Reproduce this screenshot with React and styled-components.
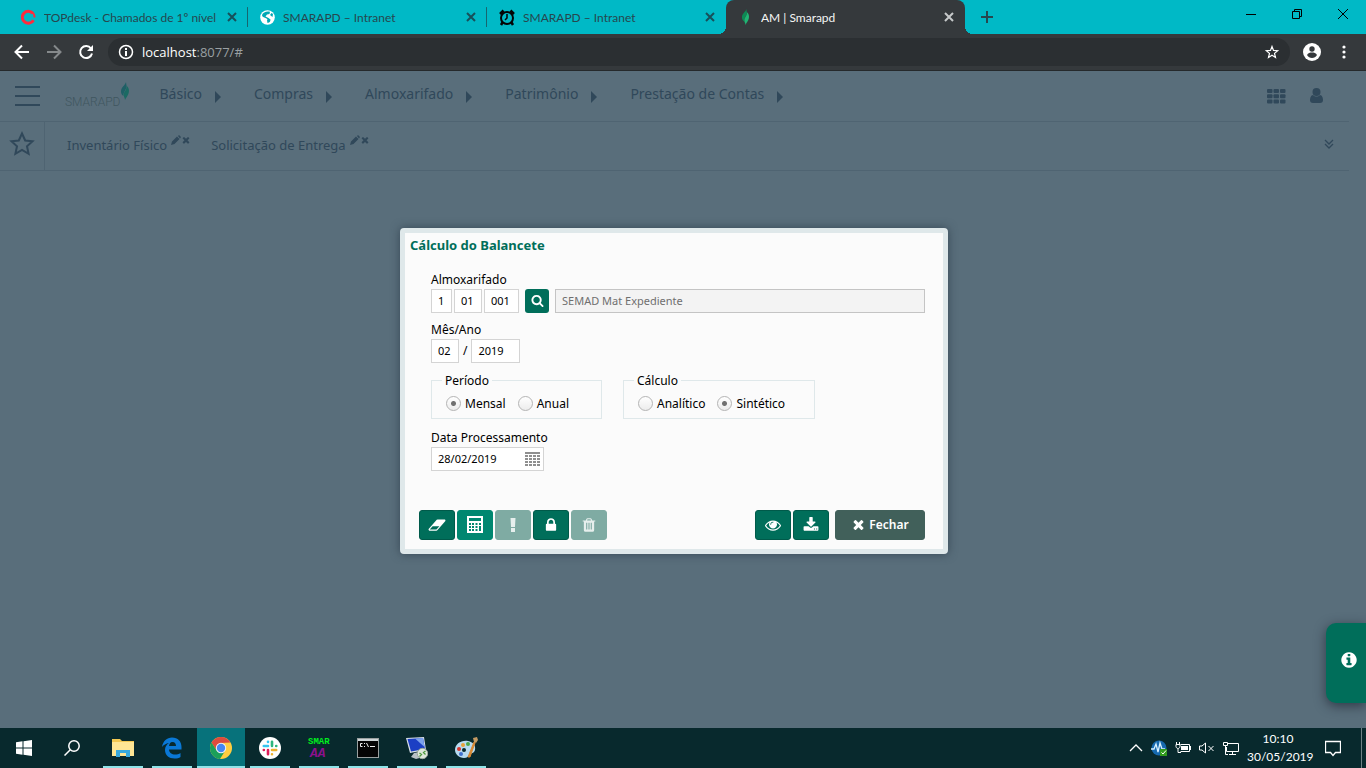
import React from "react";
import styled, { createGlobalStyle, css } from "styled-components";

const chromeFont = 'Lato, "Open Sans", sans-serif';
const appFont = '"Noto Sans", "Open Sans", sans-serif';

const GlobalStyle = createGlobalStyle`
  *, *::before, *::after { box-sizing: border-box; }
  body { margin: 0; font-family: ${appFont}; }
  button { border: 0; padding: 0; background: none; color: inherit; font: inherit; }
  a { color: inherit; text-decoration: none; }
  svg { display: block; flex: none; }
`;

const Screen = styled.div`
  display: flex;
  flex-direction: column;
  min-height: 100vh;
`;

/* Browser window */

const TabStrip = styled.div`
  display: flex;
  align-items: flex-start;
  height: 34px;
  padding-left: 9px;
  background: #00b9c6;
  color: #26474e;
  font-family: ${chromeFont};
  font-size: 12px;
`;

const Tab = styled.div`
  position: relative;
  display: flex;
  align-items: center;
  flex: 0 1 239px;
  min-width: 0;
  height: 34px;
  padding: 0 11px 0 12px;
  border-radius: 8px 8px 0 0;
  ${(p) =>
    p.$divided &&
    css`
      background: linear-gradient(#17666f, #17666f) no-repeat right 7px / 1px 20px;
    `}
  ${(p) =>
    p.$active &&
    css`
      background: #35393c;
      color: #f4f5f5;
      &::before,
      &::after {
        content: "";
        position: absolute;
        bottom: 0;
        width: 8px;
        height: 8px;
      }
      &::before {
        right: 100%;
        background: radial-gradient(circle at 0 0, transparent 8px, #35393c 8px);
      }
      &::after {
        left: 100%;
        background: radial-gradient(circle at 100% 0, transparent 8px, #35393c 8px);
      }
    `}
`;

const TabTitle = styled.span`
  flex: 1;
  min-width: 0;
  margin-left: 8px;
  overflow: hidden;
  white-space: nowrap;
`;

const TabClose = styled.button`
  color: ${(p) => (p.$active ? "#c6c9ca" : "#17505a")};
`;

const NewTab = styled.button`
  display: flex;
  align-items: center;
  height: 34px;
  padding-left: 16px;
`;

const WindowControls = styled.div`
  display: flex;
  margin-left: auto;
  color: #000;
`;

const WindowButton = styled.button`
  display: flex;
  align-items: center;
  justify-content: center;
  width: 46px;
  height: 28px;
`;

const Toolbar = styled.div`
  display: flex;
  align-items: center;
  height: 37px;
  padding: 0 14px;
  border-bottom: 1px solid #25292b;
  background: #35393c;
  color: #fff;
`;

const NavButtons = styled.div`
  display: flex;
  gap: 16px;
  margin-right: 14px;
`;

const NavButton = styled.button`
  color: ${(p) => (p.disabled ? "#85898b" : "#fff")};
`;

const AddressBar = styled.div`
  display: flex;
  align-items: center;
  flex: 1;
  height: 28px;
  padding: 0 10px;
  border-radius: 14px;
  background: #2b2f32;
`;

const Address = styled.span`
  flex: 1;
  margin-left: 8px;
  color: #fff;
  font-family: "Open Sans", "Noto Sans", sans-serif;
  font-size: 13px;
  span { color: #9aa0a3; }
`;

const ToolbarIcons = styled.div`
  display: flex;
  align-items: center;
  gap: 15px;
  margin-left: 13px;
`;

/* Application page */

const Page = styled.main`
  position: relative;
  flex: 1;
  overflow: hidden;
  background: #596e7b;
  color: #30485a;
`;

const PageHeader = styled.header`
  display: flex;
  align-items: center;
  height: 51px;
  margin-right: 17px;
  padding: 0 26px 0 15px;
  border-bottom: 1px solid #4f6472;
`;

const Brand = styled.a`
  display: flex;
  align-items: flex-end;
  height: 28px;
  margin: 0 29px 0 25px;
  color: #40565f;
  font-family: Roboto, "Open Sans", sans-serif;
  font-size: 12px;
  font-weight: 300;
  line-height: 16px;
`;

const BrandMark = styled.span`
  display: flex;
  align-self: stretch;
`;

const Menu = styled.nav`
  display: flex;
  gap: 33px;
  font-size: 14px;
  line-height: 20px;
`;

const MenuLink = styled.a`
  display: flex;
  align-items: center;
  gap: 13px;
  margin-bottom: 4px;
  &::after {
    content: "";
    margin-top: 5px;
    border-left: 6px solid;
    border-top: 6px solid transparent;
    border-bottom: 6px solid transparent;
  }
`;

const HeaderActions = styled.div`
  display: flex;
  gap: 24px;
  margin-left: auto;
`;

const Favorites = styled.div`
  display: flex;
  align-items: center;
  height: 49px;
  margin-right: 17px;
  padding: 0 15px 2px 0;
  border-bottom: 1px solid #4f6472;
  font-size: 13px;
`;

const StarCell = styled.button`
  display: flex;
  align-items: center;
  justify-content: center;
  align-self: stretch;
  width: 45px;
  margin: 0 22px -2px 0;
  padding-bottom: 4px;
  border-right: 1px solid #4f6472;
`;

const Favorite = styled.div`
  display: flex;
  margin-right: 20px;
  line-height: 20px;
  button { height: 10px; }
  a { margin-right: 4px; }
`;

const Expand = styled.button`
  margin-left: auto;
  padding-bottom: 2px;
`;

const InfoTab = styled.button`
  position: absolute;
  right: 0;
  bottom: 25px;
  display: flex;
  align-items: center;
  justify-content: center;
  width: 40px;
  height: 80px;
  padding: 0 0 6px 5px;
  border-radius: 10px 0 0 10px;
  background: #006e5a;
  color: #fff;
  box-shadow: 0 3px 12px rgba(30, 35, 50, 0.7);
`;

const Overlay = styled.div`
  position: absolute;
  inset: 0;
  display: flex;
  align-items: center;
  justify-content: center;
  padding: 0 18px 18px 0;
  pointer-events: none;
`;

/* Dialog */

const Dialog = styled.section`
  width: 548px;
  border: 5px solid #dfe8ea;
  border-radius: 4px;
  background: #fbfbfb;
  color: #000;
  font-size: 12px;
  box-shadow: 0 0 10px rgba(40, 55, 70, 0.7);
  pointer-events: auto;
`;

const DialogTitle = styled.h1`
  margin: 0;
  padding-left: 5px;
  color: #006e5a;
  font-size: 13px;
  line-height: 24px;
`;

const Form = styled.form`
  display: flex;
  flex-direction: column;
  gap: 8px;
  padding: 14px 18px 0 26px;
`;

const FieldLabel = styled.label`
  display: block;
  line-height: 18px;
`;

const FieldRow = styled.div`
  display: flex;
  align-items: center;
  gap: ${(p) => p.$gap || 2}px;
`;

const inputBox = css`
  height: 24px;
  border: 1px solid #d4d4d4;
  background: #fff;
  color: #000;
  font: 11px/20px ${appFont};
`;

const widths = { one: 21, two: 28, three: 35, year: 49 };

const TextInput = styled.input`
  ${inputBox}
  width: ${(p) => widths[p.$size]}px;
  padding: 0 0 0 6px;
`;

const ReadOnlyInput = styled.input`
  ${inputBox}
  flex: 1;
  min-width: 0;
  padding: 0 6px;
  border-color: #c4c4c4;
  background: #f3f3f3;
  color: #6f6f6f;
`;

const SearchButton = styled.button`
  display: flex;
  align-items: center;
  justify-content: center;
  width: 24px;
  height: 24px;
  margin: 0 4px;
  border-radius: 3px;
  background: #006e5a;
  color: #fff;
`;

const GroupRow = styled.div`
  display: flex;
  gap: 21px;
  padding-bottom: 2px;
`;

const Group = styled.fieldset`
  display: flex;
  gap: 12px;
  width: ${(p) => p.$width}px;
  height: 48px;
  margin: 0;
  padding: 4px 0 0 14px;
  border: 1px solid #dfe8ea;
  legend {
    margin-left: -4px;
    padding: 0 3px;
    line-height: 20px;
  }
`;

const RadioLabel = styled.label`
  display: flex;
  align-items: center;
  gap: 4px;
  height: 18px;
`;

const Radio = styled.input.attrs({ type: "radio" })`
  appearance: none;
  width: 15px;
  height: 15px;
  margin: 0;
  border: 1px solid #b4b4b4;
  border-radius: 50%;
  background: linear-gradient(#fff, #ececec);
  &:checked {
    background: radial-gradient(circle, #707070 2px, transparent 3px), linear-gradient(#fff, #ececec);
  }
`;

const DateBox = styled.div`
  ${inputBox}
  display: flex;
  align-items: center;
  width: 113px;
  padding: 0 3px 0 6px;
  input {
    flex: 1;
    min-width: 0;
    padding: 0;
    border: 0;
    background: none;
    font: inherit;
  }
`;

const DialogFooter = styled.footer`
  display: flex;
  gap: 2px;
  padding: 39px 18px 9px 14px;
`;

const tones = { primary: "#006e5a", active: "#008770", muted: "#7faba3", close: "#41605a" };

const ActionButton = styled.button`
  display: flex;
  align-items: center;
  justify-content: center;
  gap: 3px;
  width: ${(p) => (p.$wide ? 90 : 36)}px;
  height: 30px;
  border: 1px solid ${(p) => (p.$tone === "primary" ? "#005a4a" : tones[p.$tone])};
  border-radius: 3px;
  background: ${(p) => tones[p.$tone]};
  color: ${(p) => (p.$tone === "muted" ? "#e6efed" : "#fff")};
  font-weight: 600;
`;

const FooterEnd = styled.div`
  display: flex;
  gap: 2px;
  margin-left: auto;
  margin-right: 4px;
`;

/* Windows taskbar */

const Taskbar = styled.footer`
  display: flex;
  height: 40px;
  background: #08292d;
  color: #fff;
  font-family: ${chromeFont};
  font-size: 12px;
`;

const SystemButton = styled.button`
  position: relative;
  display: flex;
  align-items: center;
  justify-content: center;
  width: 48px;
  height: 40px;
`;

const Apps = styled.div`
  display: flex;
  gap: 1px;
  margin-left: 3px;
`;

const AppButton = styled(SystemButton)`
  background: ${(p) => (p.$active ? "#07727b" : "none")};
  &::after {
    content: "";
    position: absolute;
    bottom: 0;
    width: ${(p) => (p.$active ? 48 : 40)}px;
    height: 2px;
    background: #8fe3e8;
  }
`;

const Tray = styled.div`
  display: flex;
  align-items: center;
  gap: 8px;
  margin-left: auto;
  padding-right: 4px;
`;

const Clock = styled.time`
  width: 62px;
  line-height: 18px;
  text-align: center;
`;

const Notifications = styled.button`
  display: flex;
  padding: 0 20px 0 8px;
  height: 40px;
  align-items: center;
  border-right: 1px solid #6d8285;
`;

/* Drawings */

const glyphs = {
  times:
    "M1490 1322q0 40-28 68l-136 136q-28 28-68 28t-68-28l-294-294-294 294q-28 28-68 28t-68-28l-136-136q-28-28-28-68t28-68l294-294-294-294q-28-28-28-68t28-68l136-136q28-28 68-28t68 28l294 294 294-294q28-28 68-28t68 28l136 136q28 28 28 68t-28 68l-294 294 294 294q28 28 28 68z",
  search:
    "M1216 832q0-185-131.5-316.5t-316.5-131.5-316.5 131.5-131.5 316.5 131.5 316.5 316.5 131.5 316.5-131.5 131.5-316.5zm512 832q0 52-38 90t-90 38q-54 0-90-38l-343-342q-179 124-399 124-143 0-273.5-55.5t-225-150-150-225-55.5-273.5 55.5-273.5 150-225 225-150 273.5-55.5 273.5 55.5 225 150 150 225 55.5 273.5q0 220-124 399l343 343q37 37 37 90z",
  lock: "M640 768h512v-192q0-106-75-181t-181-75-181 75-75 181v192zm832 96v576q0 40-28 68t-68 28h-960q-40 0-68-28t-28-68v-576q0-40 28-68t68-28h32v-192q0-184 132-316t316-132 316 132 132 316v192h32q40 0 68 28t28 68z",
  eye: "M1664 960q-152-236-381-353 61 104 61 225 0 185-131.5 316.5t-316.5 131.5-316.5-131.5-131.5-316.5q0-121 61-225-229 117-381 353 133 205 333.5 326.5t434.5 121.5 434.5-121.5 333.5-326.5zm-720-384q0-20-14-34t-34-14q-125 0-214.5 89.5t-89.5 214.5q0 20 14 34t34 14 34-14 14-34q0-86 61-147t147-61q20 0 34-14t14-34zm848 384q0 34-20 69-140 230-376.5 368.5t-499.5 138.5-499.5-139-376.5-368q-20-35-20-69t20-69q140-229 376.5-368t499.5-139 499.5 139 376.5 368q20 35 20 69z",
  download:
    "M1344 1344q0-26-19-45t-45-19-45 19-19 45 19 45 45 19 45-19 19-45zm256 0q0-26-19-45t-45-19-45 19-19 45 19 45 45 19 45-19 19-45zm128-224v320q0 40-28 68t-68 28h-1472q-40 0-68-28t-28-68v-320q0-40 28-68t68-28h465l135 136q58 56 136 56t136-56l136-136h464q40 0 68 28t28 68zm-325-569q17 41-14 70l-448 448q-18 19-45 19t-45-19l-448-448q-31-29-14-70 17-39 59-39h256v-448q0-26 19-45t45-19h256q26 0 45 19t19 45v448h256q42 0 59 39z",
  eraser:
    "M960 1408l336-384h-768l-336 384h768zm1013-1077q15 34 9.5 71.5t-30.5 65.5l-896 1024q-38 44-96 44h-768q-38 0-69.5-20.5t-47.5-54.5q-15-34-9.5-71.5t30.5-65.5l896-1024q38-44 96-44h768q38 0 69.5 20.5t47.5 54.5z",
  info: "M1152 1376v-160q0-14-9-23t-23-9h-96v-512q0-14-9-23t-23-9h-320q-14 0-23 9t-9 23v160q0 14 9 23t23 9h96v320h-96q-14 0-23 9t-9 23v160q0 14 9 23t23 9h448q14 0 23-9t9-23zm-128-896v-160q0-14-9-23t-23-9h-192q-14 0-23 9t-9 23v160q0 14 9 23t23 9h192q14 0 23-9t9-23zm640 416q0 209-103 385.5t-279.5 279.5-385.5 103-385.5-103-279.5-279.5-103-385.5 103-385.5 279.5-279.5 385.5-103 385.5 103 279.5 279.5 103 385.5z",
  trash:
    "M704 1376v-704q0-14-9-23t-23-9h-64q-14 0-23 9t-9 23v704q0 14 9 23t23 9h64q14 0 23-9t9-23zm256 0v-704q0-14-9-23t-23-9h-64q-14 0-23 9t-9 23v704q0 14 9 23t23 9h64q14 0 23-9t9-23zm256 0v-704q0-14-9-23t-23-9h-64q-14 0-23 9t-9 23v704q0 14 9 23t23 9h64q14 0 23-9t9-23zm-544-992h448l-48-117q-7-9-17-11h-317q-10 2-17 11zm928 32v64q0 14-9 23t-23 9h-96v948q0 83-47 143.5t-113 60.5h-832q-66 0-113-58.5t-47-141.5v-952h-96q-14 0-23-9t-9-23v-64q0-14 9-23t23-9h309l70-167q15-37 54-63t79-26h320q40 0 79 26t54 63l70 167h309q14 0 23 9t9 23z",
};

const Glyph = ({ name, size = 16, box = 1792 }) => (
  <svg width={Math.round((size * box) / 1792)} height={size} viewBox={`0 0 ${box} 1792`} fill="currentColor" aria-hidden="true">
    <path d={glyphs[name]} />
  </svg>
);

const Line = ({ w = 16, h = w, box, d, stroke = 1, fill = "none", children }) => (
  <svg width={w} height={h} viewBox={box || `0 0 ${w} ${h}`} fill={fill} stroke="currentColor" strokeWidth={stroke} aria-hidden="true">
    {d && <path d={d} />}
    {children}
  </svg>
);

const Cells = ({ cols, rows, w, h, dx, dy, r = 0, x = 0, y = 0 }) =>
  Array.from({ length: cols * rows }, (_, i) => (
    <rect key={i} x={x + (i % cols) * dx} y={y + Math.floor(i / cols) * dy} width={w} height={h} rx={r} fill="currentColor" stroke="none" />
  ));

const CloseX = () => <Line w={10} d="M1 1l8 8M9 1l-8 8" stroke={2} />;

const Leaf = ({ w, h, a, b }) => (
  <svg width={w} height={h} viewBox="0 0 10 18" aria-hidden="true">
    <path d="M6 0C5.500 3 1 5 1 9.500c0 2 1 3.500 2.500 4.500C3 10 6.500 8 6.500 4z" fill={a} />
    <path d="M6.500 3.500C9 6 9.300 8 8.800 10.500 8.300 13.500 6 15.500 5 18 5 15.500 3.500 15 3.700 12.500 4 9 7 8 6.500 3.500z" fill={b} />
  </svg>
);

const TopdeskIcon = () => (
  <svg width="15" height="16" viewBox="0 0 15 16" fill="none" stroke="#ff2b3d" strokeWidth="3">
    <path d="M11.800 4.200A6 6 0 1 0 12.500 11.200" />
    <path d="M9.500 2.600A6 6 0 0 1 13.500 8.500" strokeWidth="2" />
  </svg>
);

const GlobeIcon = () => (
  <svg width="15" height="15" viewBox="0 0 15 15">
    <circle cx="7.500" cy="7.500" r="7.300" fill="#fff" />
    <path d="M2 5c0 2 2 2.500 3.500 3s2.500 1.500 1.500 2.500l.500 2.500c2.500-.500 3-2 3-3.500L8.500 8 5.500 6.500 7 4.500l2.500-.500L10 1.800C6.500.800 3 2.500 2 5zM10 5l2.500 2 .500-3-1.500-1z" fill="#00a9b5" />
  </svg>
);

const AlarmIcon = () => (
  <svg width="16" height="17" viewBox="0 0 16 17" fill="none" stroke="#050505">
    <circle cx="8" cy="9" r="6" strokeWidth="2" />
    <path d="M8 5v4l-2 2" strokeWidth="1.500" />
    <path d="M1 5L4.500 1.500M15 5l-3.500-3.500M3.500 13.500L2 16M12.500 13.500L14 16" strokeWidth="2.500" />
  </svg>
);

const apps = [
  {
    name: "Explorador de Arquivos",
    icon: (
      <svg width="22" height="20" viewBox="0 0 22 20">
        <path d="M0 1h8l2 2h12v15H0z" fill="#f3c852" />
        <path d="M0 4h22v14H0z" fill="#ffe694" />
        <path d="M4 19v-7h14v7h-4v-4H8v4z" fill="#39a9dc" />
      </svg>
    ),
  },
  {
    name: "Edge",
    icon: (
      <svg width="22" height="22" viewBox="0 0 22 22">
        <path d="M1 10C2 4 6 .500 11 .500c6 0 9.500 4 9.500 9.500v2.500H8c0 3 3 5 6 5 2 0 4-.500 5.500-1.500v4C18 21 16 21.500 13.500 21.500 8 21.500 4 18 4 13c0-3 1.500-5.500 4-7-3 .500-5.500 2-7 4zm7-1h7c0-2-1-4-3.500-4S8.500 7 8 9z" fill="#0a78d6" />
      </svg>
    ),
  },
  {
    name: "Chrome",
    active: true,
    icon: (
      <svg width="22" height="22" viewBox="0 0 22 22">
        <circle cx="11" cy="11" r="11" fill="#ffcd40" />
        <path d="M1.500 5.500A11 11 0 0 1 20.500 5.500L11 6 6.700 13.500z" fill="#dd4b3e" />
        <path d="M1.500 5.500A11 11 0 0 0 10 22l5.300-8.500-4.300 2.500-4.300-2.500z" fill="#1a9f5a" />
        <circle cx="11" cy="11" r="5.200" fill="#f2f2f2" />
        <circle cx="11" cy="11" r="4.200" fill="#4587f3" />
      </svg>
    ),
  },
  {
    name: "Slack",
    icon: (
      <svg width="22" height="22" viewBox="0 0 22 22" strokeWidth="2.600" strokeLinecap="round">
        <circle cx="11" cy="11" r="11" fill="#fff" />
        <path d="M9 4.800v.100M4.800 9H9" stroke="#36c5f0" />
        <path d="M13 4.800V9M17.200 9h.100" stroke="#2eb67d" />
        <path d="M13 13h4.200M13 17.200v.100" stroke="#ecb22e" />
        <path d="M9 13v4.200M4.800 13h.100" stroke="#e01e5a" />
      </svg>
    ),
  },
  {
    name: "SMAR AA",
    icon: (
      <svg width="24" height="30" viewBox="0 0 24 30" fontFamily="Liberation Mono, monospace" fontWeight="700">
        <text x="1" y="11" fontSize="9" fill="#00ef1e">SMAR</text>
        <text x="3" y="24" fontSize="13" fontStyle="italic" fill="#8d118d">AA</text>
      </svg>
    ),
  },
  {
    name: "Prompt de Comando",
    icon: (
      <svg width="22" height="20" viewBox="0 0 22 20">
        <rect x=".500" y=".500" width="21" height="19" fill="#050505" stroke="#9aa0a0" />
        <path d="M1 1h20v2H1z" fill="#cfd6d8" />
        <path d="M5.500 5.500h-2v3h2M7.500 5v1M7.500 8v1M9.500 5l2 4M13 8.500h5" fill="none" stroke="#eee" />
      </svg>
    ),
  },
  {
    name: "Conexão Remota",
    icon: (
      <svg width="22" height="24" viewBox="0 0 22 24">
        <path d="M0 2l18-1 2 13-16 3z" fill="#d6dde6" />
        <path d="M1.500 3l15.500-1 2 11-14 2.500z" fill="#1c3fc4" />
        <path d="M9 2.500l8-.500 1.500 9z" fill="#7da2ee" />
        <path d="M8 17l5-1 1 4 3 1-7 2-5-2z" fill="#b9c0c6" />
        <circle cx="16.500" cy="17.500" r="5.200" fill="#dfe8dc" stroke="#9aa79a" />
        <path d="M13.500 17l2 1.500-2 2M19.500 15l-2 1.500 2 2" stroke="#4e9a3c" strokeWidth="1.300" fill="none" />
      </svg>
    ),
  },
  {
    name: "Paint",
    icon: (
      <svg width="24" height="24" viewBox="0 0 24 24">
        <path d="M1 14C1 8 7 4 14 5c5 1 8 4 7 9-1 4-5 3-6 5s-2 3-5 3C5 22 1 18 1 14z" fill="#b7dbf0" />
        <circle cx="5" cy="13" r="2" fill="#d8352d" />
        <circle cx="9" cy="9" r="2" fill="#e8a23a" />
        <circle cx="14" cy="8" r="2" fill="#4ca64c" />
        <circle cx="10" cy="14" r="2" fill="#08292d" />
        <circle cx="7" cy="18" r="2" fill="#4072cf" />
        <path d="M14 21L20 6l1 1-5 14z" fill="#d88a35" stroke="#d88a35" />
        <path d="M20 6l-1-4 4-1 1 3-2 3z" fill="#c39a63" />
      </svg>
    ),
  },
];

const tabs = [
  { title: "TOPdesk - Chamados de 1º nível", icon: <TopdeskIcon />, divided: true },
  { title: "SMARAPD – Intranet", icon: <GlobeIcon />, divided: true },
  { title: "SMARAPD – Intranet", icon: <AlarmIcon /> },
  { title: "AM | Smarapd", icon: <Leaf w={15} h={16} a="#0c8a54" b="#20b573" />, active: true },
];

const menu = ["Básico", "Compras", "Almoxarifado", "Patrimônio", "Prestação de Contas"];

export default function App() {
  return (
    <Screen>
      <GlobalStyle />
      <TabStrip>
        {tabs.map((t, i) => (
          <Tab key={i} $active={t.active} $divided={t.divided}>
            {t.icon}
            <TabTitle>{t.title}</TabTitle>
            <TabClose $active={t.active} aria-label="Fechar guia"><CloseX /></TabClose>
          </Tab>
        ))}
        <NewTab aria-label="Nova guia"><Line w={12} d="M6 0v12M0 6h12" stroke={2} /></NewTab>
        <WindowControls>
          <WindowButton aria-label="Minimizar"><Line w={10} d="M0 5.500h10" /></WindowButton>
          <WindowButton aria-label="Restaurar"><Line w={10} d="M.500 2.500h7v7h-7zM2.500 2.500v-2h7v7h-2" /></WindowButton>
          <WindowButton aria-label="Fechar"><Line w={10} d="M0 0l10 10M10 0L0 10" /></WindowButton>
        </WindowControls>
      </TabStrip>

      <Toolbar>
        <NavButtons>
          <NavButton aria-label="Voltar"><Line w={16} d="M15 8H2M8 1.500L1.500 8 8 14.500" stroke={2} /></NavButton>
          <NavButton aria-label="Avançar" disabled><Line w={16} d="M1 8h13M8 1.500L14.500 8 8 14.500" stroke={2} /></NavButton>
          <NavButton aria-label="Recarregar">
            <Line w={16} d="M13 4.500A6 6 0 1 0 14 9.500" stroke={2}><path d="M15 1v6H9z" fill="currentColor" stroke="none" /></Line>
          </NavButton>
        </NavButtons>
        <AddressBar>
          <Line w={16} stroke={2}>
            <circle cx="8" cy="8" r="6.500" strokeWidth="1.500" />
            <path d="M8 7v5M8 4v2" />
          </Line>
          <Address>localhost<span>:8077/#</span></Address>
          <Line w={16} d="M8 2.500l1.500 3.900 4.200.300-3.200 2.700 1 4.100L8 11.300l-3.500 2.200 1-4.100-3.200-2.700 4.200-.300z" stroke={1.2} />
        </AddressBar>
        <ToolbarIcons>
          <svg width="18" height="18" viewBox="0 0 18 18">
            <circle cx="9" cy="9" r="9" fill="#fff" />
            <circle cx="9" cy="6" r="2.700" fill="#35393c" />
            <path d="M4 12c1-2 3-2.500 5-2.500s4 .500 5 2.500c-1 2-3 3-5 3s-4-1-5-3z" fill="#35393c" />
          </svg>
          <svg width="16" height="16" viewBox="0 0 16 16" fill="#fff">
            <circle cx="8" cy="3" r="1.600" /><circle cx="8" cy="8" r="1.600" /><circle cx="8" cy="13" r="1.600" />
          </svg>
        </ToolbarIcons>
      </Toolbar>

      <Page>
        <PageHeader>
          <button aria-label="Menu"><Line w={25} h={20} d="M0 1h25M0 10h25M0 19h25" stroke={2} /></button>
          <Brand href="#">
            SMARAPD
            <BrandMark><Leaf w={10} h={18} a="#1f5f66" b="#1b6a63" /></BrandMark>
          </Brand>
          <Menu>
            {menu.map((m) => <MenuLink key={m} href="#">{m}</MenuLink>)}
          </Menu>
          <HeaderActions>
            <button aria-label="Aplicativos">
              <Line w={19} h={15}><Cells cols={3} rows={3} w={5.5} h={4} dx={6.5} dy={5.3} r={1} /></Line>
            </button>
            <button aria-label="Usuário">
              <Line w={13} h={16} stroke={0} fill="currentColor" d="M6.500 0a4 4 0 0 1 0 8 4 4 0 0 1 0-8zM3 7c2 2 5 2 7 0 2 0 3 3 3 5s-1 3-3 3H3c-2 0-3-1-3-3s1-5 3-5z" />
            </button>
          </HeaderActions>
        </PageHeader>

        <Favorites>
          <StarCell aria-label="Favoritos">
            <Line w={26} d="M13 2.500l3.200 7 7.300.800-5.500 5 1.600 7.500-6.600-3.800-6.600 3.800L8 15.300l-5.500-5 7.300-.800z" stroke={2} />
          </StarCell>
          {["Inventário Físico", "Solicitação de Entrega"].map((f) => (
            <Favorite key={f}>
              <a href="#">{f}</a>
              <button aria-label="Editar">
                <Line w={10} stroke={0} fill="currentColor" d="M0 10l1-3.500L6 1.500 8.500 4l-5 5zM7 1l1-1 2 2-1 1.500z" />
              </button>
              <button aria-label="Remover"><Glyph name="times" size={10} /></button>
            </Favorite>
          ))}
          <Expand aria-label="Expandir"><Line w={10} d="M1 1l4 4 4-4M1 5l4 4 4-4" stroke={1.3} /></Expand>
        </Favorites>

        <InfoTab aria-label="Informações"><Glyph name="info" size={18} /></InfoTab>

        <Overlay>
          <Dialog role="dialog" aria-labelledby="dialog-title">
            <DialogTitle id="dialog-title">Cálculo do Balancete</DialogTitle>
            <Form>
              <div>
                <FieldLabel htmlFor="almox">Almoxarifado</FieldLabel>
                <FieldRow>
                  <TextInput id="almox" $size="one" defaultValue="1" />
                  <TextInput $size="two" defaultValue="01" aria-label="Grupo" />
                  <TextInput $size="three" defaultValue="001" aria-label="Subgrupo" />
                  <SearchButton type="button" aria-label="Pesquisar"><Glyph name="search" size={13} /></SearchButton>
                  <ReadOnlyInput readOnly value="SEMAD Mat Expediente" aria-label="Descrição" />
                </FieldRow>
              </div>
              <div>
                <FieldLabel htmlFor="mes">Mês/Ano</FieldLabel>
                <FieldRow $gap={4}>
                  <TextInput id="mes" $size="two" defaultValue="02" />
                  <span>/</span>
                  <TextInput $size="year" defaultValue="2019" aria-label="Ano" />
                </FieldRow>
              </div>
              <GroupRow>
                <Group $width={171}>
                  <legend>Período</legend>
                  <RadioLabel><Radio name="periodo" defaultChecked />Mensal</RadioLabel>
                  <RadioLabel><Radio name="periodo" />Anual</RadioLabel>
                </Group>
                <Group $width={192}>
                  <legend>Cálculo</legend>
                  <RadioLabel><Radio name="calculo" />Analítico</RadioLabel>
                  <RadioLabel><Radio name="calculo" defaultChecked />Sintético</RadioLabel>
                </Group>
              </GroupRow>
              <div>
                <FieldLabel htmlFor="data">Data Processamento</FieldLabel>
                <DateBox>
                  <input id="data" defaultValue="28/02/2019" />
                  <button type="button" aria-label="Calendário">
                    <svg width="15" height="14" viewBox="0 0 15 14" color="#8f8f8f">
                      <rect width="15" height="2" fill="currentColor" />
                      <Cells cols={4} rows={4} w={3} h={2} dx={4} dy={3} y={3} />
                    </svg>
                  </button>
                </DateBox>
              </div>
            </Form>
            <DialogFooter>
              <ActionButton $tone="primary" aria-label="Limpar"><Glyph name="eraser" size={16} box={2048} /></ActionButton>
              <ActionButton $tone="active" aria-label="Calcular">
                <Line w={16} h={17}>
                  <path d="M0 0h16v17H0zM2 2v3h12V2zM2 7v2h2V7zM5 7v2h2V7zM8.500 7v2h2V7zM12 7v2h2V7zM2 10v2h2v-2zM5 10v2h2v-2zM8.500 10v2h2v-2zM12 10v5h2v-5zM2 13v2h2v-2zM5 13v2h2v-2zM8.500 13v2h2v-2z" fill="currentColor" fillRule="evenodd" stroke="none" />
                </Line>
              </ActionButton>
              <ActionButton $tone="muted" aria-label="Alerta">
                <Line w={6} h={14} stroke={0} fill="currentColor" d="M.500 0h5L5 9H1zM1 10h4v4H1z" />
              </ActionButton>
              <ActionButton $tone="primary" aria-label="Bloquear"><Glyph name="lock" size={16} /></ActionButton>
              <ActionButton $tone="muted" aria-label="Excluir"><Glyph name="trash" size={16} /></ActionButton>
              <FooterEnd>
                <ActionButton $tone="primary" aria-label="Visualizar"><Glyph name="eye" size={16} /></ActionButton>
                <ActionButton $tone="primary" aria-label="Baixar"><Glyph name="download" size={16} /></ActionButton>
              </FooterEnd>
              <ActionButton $tone="close" $wide><Glyph name="times" size={15} />Fechar</ActionButton>
            </DialogFooter>
          </Dialog>
        </Overlay>
      </Page>

      <Taskbar>
        <SystemButton aria-label="Iniciar">
          <Line w={16} stroke={0} fill="currentColor" d="M0 2.200L6.500 1.300V7.500H0zM7.500 1.200L16 0v7.500H7.500zM0 8.500h6.500v6.200L0 13.800zM7.500 8.500H16V16l-8.500-1.200z" />
        </SystemButton>
        <SystemButton aria-label="Pesquisar">
          <Line w={16} stroke={1.5}><circle cx="10" cy="6" r="5.200" /><path d="M6.300 9.700L.500 15.500" /></Line>
        </SystemButton>
        <Apps>
          {apps.map((a) => <AppButton key={a.name} $active={a.active} aria-label={a.name}>{a.icon}</AppButton>)}
        </Apps>
        <Tray>
          <Line w={14} h={8} d="M1 7l6-6 6 6" stroke={1.3} />
          <svg width="16" height="16" viewBox="0 0 16 16" fill="none">
            <circle cx="8" cy="8" r="7.500" fill="#1669ae" />
            <path d="M0 9h3l2-5 2 8 2-9 2 6h3" stroke="#d9f1ff" strokeWidth="1.300" />
            <rect x="9" y="9" width="7" height="7" fill="#2f9a1c" />
            <path d="M10.500 12.500l1.500 1.500 3-3.500" stroke="#fff" />
          </svg>
          <Line w={16} h={14}>
            <path d="M5.500 3.500h9v7h-9M15.500 5v4M1.500 1v2M4.500 1v2M1 3.500h4v2c0 1-1 2-2 2s-2-1-2-2zM3 7.500v4h3" />
            <rect x="6" y="5" width="7" height="4" fill="currentColor" stroke="none" />
          </Line>
          <Line w={16} h={14} d="M.500 5v4h2.500l3.500 3V2L3 5zM9.500 5l5 5M14.500 5l-5 5" />
          <Line w={16} h={15} d="M5 2.500h10.500v8H3.500V6M9.500 10.500v3M6 13.500h7M.500 1.500h4v3h-4zM2.500 4.500v9H5" />
          <Clock>10:10<br />30/05/2019</Clock>
          <Notifications aria-label="Notificações">
            <Line w={16} h={17} d="M.500 1.500h15v11h-5l-2.500 3-2.500-3h-5z" stroke={1.3} />
          </Notifications>
        </Tray>
      </Taskbar>
    </Screen>
  );
}
